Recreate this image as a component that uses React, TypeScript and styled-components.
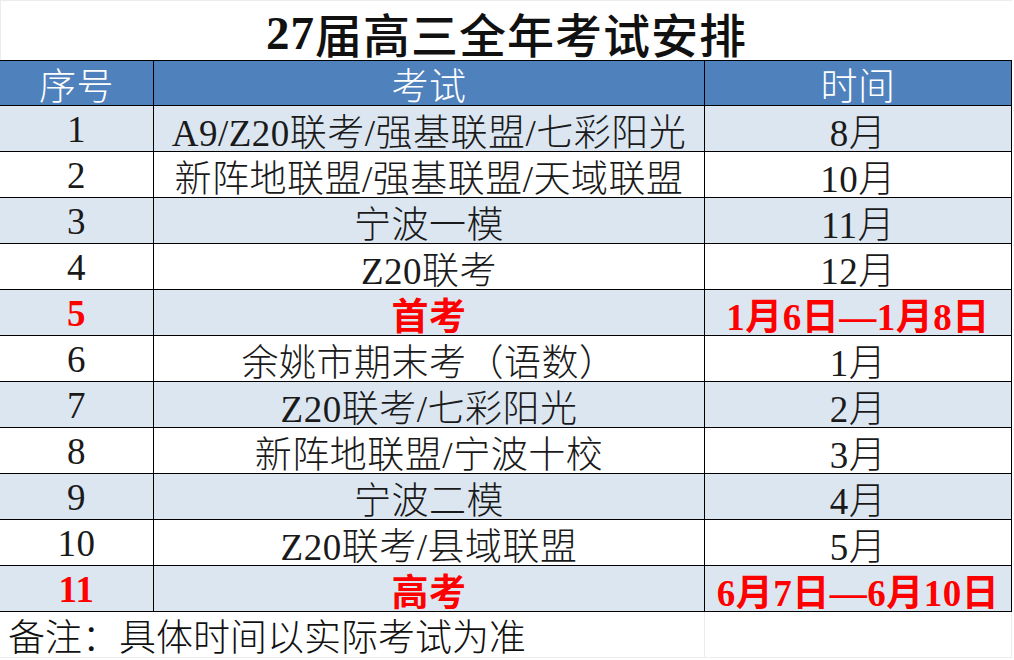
import React from "react";
import styled, { createGlobalStyle } from "styled-components";

const Global = createGlobalStyle`
  html, body { margin: 0; padding: 0; background: #ffffff; }
  body { font-family: "Liberation Serif", "Noto Sans CJK SC", serif; }
`;

const Page = styled.div`
  width: 1014px;
  height: 660px;
  background: #ffffff;
  overflow: hidden;
`;

const TitleBar = styled.div`
  width: 1012px;
  height: 60px;
  box-sizing: border-box;
  border-top: 1px solid #ececec;
  border-left: 1px solid #ececec;
  display: flex;
  align-items: center;
  justify-content: center;
  padding-top: 4px;
  font-family: "Liberation Serif", "Noto Sans CJK SC", serif;
  font-size: 47px;
  font-weight: 500;
  color: #111111;
  letter-spacing: 1px;
`;

const TitleNum = styled.span`
  font-weight: 700;
`;

const Table = styled.div`
  width: 1012px;
  display: grid;
  grid-template-columns: 154px 551px 307px;
  border-top: 1px solid #000000;
`;

const Cell = styled.div<{ $head?: boolean; $shade?: boolean; $red?: boolean }>`
  box-sizing: border-box;
  height: ${(p) => (p.$head ? "45px" : "46px")};
  border-right: 1px solid #000000;
  border-bottom: 1px solid #000000;
  display: flex;
  align-items: center;
  justify-content: center;
  white-space: nowrap;
  font-family: "Liberation Serif", "Noto Sans CJK SC", serif;
  font-size: 37px;
  letter-spacing: 0.5px;
  font-weight: ${(p) => (p.$red ? 700 : 300)};
  background: ${(p) => (p.$head ? "#4f81bd" : p.$shade ? "#dce6f1" : "#ffffff")};
  color: ${(p) => (p.$head ? "#ffffff" : p.$red ? "#ff0000" : "#1a1a1a")};
  padding-top: 2px;
`;

const Footer = styled.div`
  width: 1012px;
  height: 48px;
  display: grid;
  grid-template-columns: 705px 307px;
`;

const FootCell = styled.div`
  box-sizing: border-box;
  height: 46px;
  border-right: 1px solid #ececec;
  border-bottom: 1px solid #ececec;
  display: flex;
  align-items: center;
  padding-left: 8px;
  white-space: nowrap;
  overflow: visible;
  font-family: "Liberation Serif", "Noto Sans CJK SC", serif;
  font-size: 37px;
  font-weight: 300;
  color: #111111;
`;

type Row = { no: string; exam: string; time: string; red?: boolean };

const rows: Row[] = [
  { no: "1", exam: "A9/Z20联考/强基联盟/七彩阳光", time: "8月" },
  { no: "2", exam: "新阵地联盟/强基联盟/天域联盟", time: "10月" },
  { no: "3", exam: "宁波一模", time: "11月" },
  { no: "4", exam: "Z20联考", time: "12月" },
  { no: "5", exam: "首考", time: "1月6日—1月8日", red: true },
  { no: "6", exam: "余姚市期末考（语数）", time: "1月" },
  { no: "7", exam: "Z20联考/七彩阳光", time: "2月" },
  { no: "8", exam: "新阵地联盟/宁波十校", time: "3月" },
  { no: "9", exam: "宁波二模", time: "4月" },
  { no: "10", exam: "Z20联考/县域联盟", time: "5月" },
  { no: "11", exam: "高考", time: "6月7日—6月10日", red: true },
];

export default function App() {
  return (
    <Page>
      <Global />
      <TitleBar>
        <TitleNum>27</TitleNum>届高三全年考试安排
      </TitleBar>
      <Table>
        <Cell $head>序号</Cell>
        <Cell $head>考试</Cell>
        <Cell $head>时间</Cell>
        {rows.map((r, i) => {
          const shade = i % 2 === 0;
          return (
            <React.Fragment key={r.no}>
              <Cell $shade={shade} $red={r.red}>{r.no}</Cell>
              <Cell $shade={shade} $red={r.red}>{r.exam}</Cell>
              <Cell $shade={shade} $red={r.red}>{r.time}</Cell>
            </React.Fragment>
          );
        })}
      </Table>
      <Footer>
        <FootCell>备注：具体时间以实际考试为准</FootCell>
        <FootCell />
      </Footer>
    </Page>
  );
}
